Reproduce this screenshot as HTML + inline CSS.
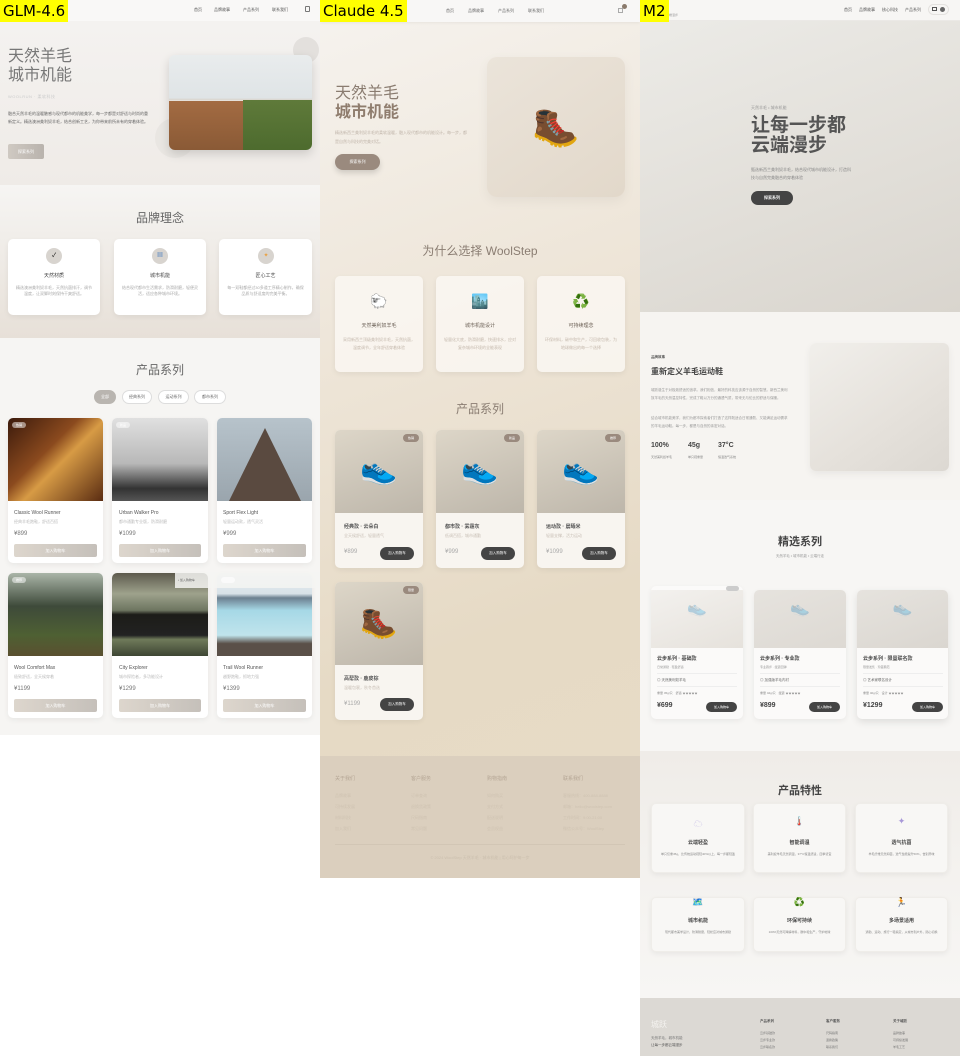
<!DOCTYPE html>
<html><head><meta charset="utf-8">
<style>
*{margin:0;padding:0;box-sizing:border-box}
body{width:960px;height:1056px;position:relative;background:#fff;font-family:"Liberation Sans","Noto Sans CJK SC",sans-serif;overflow:hidden}
.a{position:absolute}
.c{text-align:center}
.t{font-size:4px;color:#999;line-height:6px}
.lbl{position:absolute;top:0;left:0;background:#ffff00;color:#000;font-size:15px;padding:2px 3px;z-index:9;font-family:"DejaVu Sans",sans-serif}
.card{position:absolute;background:#fff;border-radius:5px;box-shadow:0 2px 6px rgba(0,0,0,.06);overflow:hidden}
.pill{position:absolute;height:14px;border-radius:7px;border:1px solid #ddd;background:#fff;font-size:4px;color:#666;text-align:center;line-height:12px}
</style></head><body>

<!-- COLUMN 1 -->
<div class="a" style="left:0;top:0;width:320px;height:735px;background:#f6f5f3;overflow:hidden">
 <div class="a" style="left:0;top:0;width:320px;height:21px;background:#f9f8f7;box-shadow:0 1px 3px rgba(0,0,0,.05)"></div>
 <div class="a t" style="left:194px;top:7px;color:#555">首页</div>
 <div class="a t" style="left:214px;top:7px;color:#555">品牌故事</div>
 <div class="a t" style="left:243px;top:7px;color:#555">产品系列</div>
 <div class="a t" style="left:272px;top:7px;color:#555">联系我们</div>
 <div class="a" style="left:305px;top:6px;width:5px;height:6px;border:1px solid #777;border-radius:1px"></div>
 <div class="a" style="left:0;top:21px;width:320px;height:164px;background:linear-gradient(180deg,#f4f2f0,#efebe7)"></div>
 <div class="a" style="left:8px;top:47px;font-size:16px;line-height:19px;color:#777">天然羊毛<br>城市机能</div>
 <div class="a" style="left:8px;top:94px;font-size:4px;color:#ccc;letter-spacing:.5px">WOOLRUN · 柔软科技</div>
 <div class="a" style="left:8px;top:110px;width:142px;font-size:4px;line-height:8px;color:#666">融合天然羊毛的温暖触感与现代都市的机能美学，每一步都是对舒适与时尚的重新定义。精选澳洲美利奴羊毛，结合创新工艺，为你带来前所未有的穿着体验。</div>
 <div class="a" style="left:8px;top:144px;width:36px;height:15px;border-radius:2px;background:linear-gradient(90deg,#cfc9c2,#b9b3ad);font-size:4px;color:#fff;text-align:center;line-height:15px">探索系列</div>
 <div class="a" style="left:155px;top:118px;width:40px;height:40px;border-radius:50%;background:#e9e6e2"></div>
 <div class="a" style="left:293px;top:37px;width:26px;height:26px;border-radius:50%;background:#e3e0dd"></div>
 <div class="a" style="left:169px;top:55px;width:143px;height:95px;border-radius:6px;overflow:hidden;box-shadow:0 4px 10px rgba(0,0,0,.15);background:linear-gradient(180deg,#e9eced 0%,#dfe4e6 45%,#d8d0c6 48%,transparent 48%)">
  <div class="a" style="left:0;top:46px;width:78px;height:49px;background:linear-gradient(180deg,#a36b42,#8a5a36)"></div>
  <div class="a" style="left:74px;top:45px;width:69px;height:50px;background:linear-gradient(180deg,#5f7a3a,#4d6b2e)"></div>
 </div>
 <div class="a" style="left:0;top:185px;width:320px;height:153px;background:linear-gradient(180deg,#f6f5f3,#e7e0d8)"></div>
 <div class="a c" style="left:0;top:209px;width:320px;font-size:12px;color:#666">品牌理念</div>
 <div class="card" style="left:8px;top:239px;width:92px;height:76px"></div>
 <div class="card" style="left:114px;top:239px;width:92px;height:76px"></div>
 <div class="card" style="left:219px;top:239px;width:93px;height:76px"></div>
 <div class="a" style="left:46px;top:248px;width:16px;height:16px;border-radius:50%;background:#d8d4cf;font-size:6px;text-align:center;line-height:16px">✓</div>
 <div class="a" style="left:152px;top:248px;width:16px;height:16px;border-radius:50%;background:#d8d4cf;font-size:6px;text-align:center;line-height:16px;color:#4a7fc0">▦</div>
 <div class="a" style="left:258px;top:248px;width:16px;height:16px;border-radius:50%;background:#d8d4cf;font-size:6px;text-align:center;line-height:16px;color:#e9a040">✦</div>
 <div class="a c" style="left:8px;top:272px;width:92px;font-size:5px;color:#444">天然材质</div>
 <div class="a c" style="left:114px;top:272px;width:92px;font-size:5px;color:#444">城市机能</div>
 <div class="a c" style="left:219px;top:272px;width:93px;font-size:5px;color:#444">匠心工艺</div>
 <div class="a c t" style="left:16px;top:285px;width:76px;color:#aaa">精选澳洲美利奴羊毛，天然抗菌排汗，调节温度，让双脚时刻保持干爽舒适。</div>
 <div class="a c t" style="left:122px;top:285px;width:76px;color:#aaa">结合现代都市生活需求，防滑耐磨，轻便灵活，适应各种城市环境。</div>
 <div class="a c t" style="left:227px;top:285px;width:77px;color:#aaa">每一双鞋都经过30多道工序精心制作，确保品质与舒适度的完美平衡。</div>
 <div class="a c" style="left:0;top:361px;width:320px;font-size:12px;color:#666">产品系列</div>
 <div class="pill" style="left:94px;top:390px;width:22px;background:#b9b5b0;border-color:#b9b5b0;color:#fff">全部</div>
 <div class="pill" style="left:122px;top:390px;width:30px">经典系列</div>
 <div class="pill" style="left:158px;top:390px;width:31px">运动系列</div>
 <div class="pill" style="left:194px;top:390px;width:32px">都市系列</div>
 <!-- product cards -->
 <div class="card" style="left:8px;top:418px;width:95px;height:145px"><div style="height:83px;background:linear-gradient(135deg,#3b1a0c,#8b4a1e 40%,#d79b45 55%,#5a2c12)"></div></div>
 <div class="card" style="left:112px;top:418px;width:96px;height:145px"><div style="height:83px;background:linear-gradient(180deg,#e0e0e0,#b8b8b8 55%,#333 85%,#555)"></div></div>
 <div class="card" style="left:217px;top:418px;width:95px;height:145px"><div style="height:83px;background:linear-gradient(180deg,#b7c3cb,#9aa5ad);position:relative"><div style="position:absolute;left:12px;top:10px;width:0;height:0;border-left:36px solid transparent;border-right:36px solid transparent;border-bottom:73px solid #5a4a40"></div></div></div>
 <div class="card" style="left:8px;top:573px;width:95px;height:145px"><div style="height:83px;background:linear-gradient(180deg,#aab5a8,#3e4a3a 40%,#4e6033 75%,#5a5030)"></div></div>
 <div class="card" style="left:112px;top:573px;width:96px;height:145px"><div style="height:83px;background:linear-gradient(180deg,#5d5a4d,#9ea28c 25%,#6d7560 45%,#1c1c18 50%,#222 75%,#6f7a5a 80%,#3d4533)"></div></div>
 <div class="card" style="left:217px;top:573px;width:95px;height:145px"><div style="height:83px;background:linear-gradient(180deg,#e8eef2,#d8e2e8 25%,#6c8090 30%,#a6d8e6 45%,#c0e4ec 75%,#5a5048 85%)"></div></div>
 <div class="a" style="left:12px;top:422px;width:14px;height:6px;border-radius:3px;background:rgba(255,255,255,.5);font-size:3px;color:#fff;text-align:center;line-height:6px">热销</div>
 <div class="a" style="left:116px;top:422px;width:14px;height:6px;border-radius:3px;background:rgba(255,255,255,.5);font-size:3px;color:#fff;text-align:center;line-height:6px">新品</div>
 <div class="a" style="left:12px;top:577px;width:14px;height:6px;border-radius:3px;background:rgba(255,255,255,.5);font-size:3px;color:#fff;text-align:center;line-height:6px">推荐</div>
 <div class="a" style="left:175px;top:572px;width:145px;height:16px;background:rgba(245,244,242,.85)"></div>
 <div class="a" style="left:178px;top:578px;font-size:3px;color:#666">• 加入购物车</div>
 <div class="a" style="left:221px;top:577px;width:14px;height:6px;border-radius:3px;background:rgba(255,255,255,.6)"></div>

 <div class="a" style="left:14px;top:510px;font-size:5px;color:#555">Classic Wool Runner</div>
 <div class="a" style="left:119px;top:510px;font-size:5px;color:#555">Urban Walker Pro</div>
 <div class="a" style="left:223px;top:510px;font-size:5px;color:#555">Sport Flex Light</div>
 <div class="a t" style="left:14px;top:519px;color:#bbb">经典羊毛跑鞋，舒适百搭</div>
 <div class="a t" style="left:119px;top:519px;color:#bbb">都市通勤专业版，防滑耐磨</div>
 <div class="a t" style="left:223px;top:519px;color:#bbb">轻量运动款，透气灵活</div>
 <div class="a" style="left:14px;top:531px;font-size:6px;color:#777">¥899</div>
 <div class="a" style="left:119px;top:531px;font-size:6px;color:#777">¥1099</div>
 <div class="a" style="left:223px;top:531px;font-size:6px;color:#777">¥999</div>
 <div class="a" style="left:14px;top:665px;font-size:5px;color:#555">Wool Comfort Max</div>
 <div class="a" style="left:119px;top:665px;font-size:5px;color:#555">City Explorer</div>
 <div class="a" style="left:223px;top:665px;font-size:5px;color:#555">Trail Wool Runner</div>
 <div class="a t" style="left:14px;top:674px;color:#bbb">极致舒适，全天候穿着</div>
 <div class="a t" style="left:119px;top:674px;color:#bbb">城市探险者，多功能设计</div>
 <div class="a t" style="left:223px;top:674px;color:#bbb">越野跑鞋，抓地力强</div>
 <div class="a" style="left:14px;top:686px;font-size:6px;color:#777">¥1199</div>
 <div class="a" style="left:119px;top:686px;font-size:6px;color:#777">¥1299</div>
 <div class="a" style="left:223px;top:686px;font-size:6px;color:#777">¥1399</div>
 <div class="a" style="left:14px;top:544px;width:83px;height:13px;border-radius:2px;background:linear-gradient(90deg,#ddd6cd,#c5c0ba);font-size:4px;color:#fff;text-align:center;line-height:13px">加入购物车</div>
 <div class="a" style="left:119px;top:544px;width:82px;height:13px;border-radius:2px;background:linear-gradient(90deg,#ddd6cd,#c5c0ba);font-size:4px;color:#fff;text-align:center;line-height:13px">加入购物车</div>
 <div class="a" style="left:223px;top:544px;width:83px;height:13px;border-radius:2px;background:linear-gradient(90deg,#ddd6cd,#c5c0ba);font-size:4px;color:#fff;text-align:center;line-height:13px">加入购物车</div>
 <div class="a" style="left:14px;top:699px;width:83px;height:13px;border-radius:2px;background:linear-gradient(90deg,#ddd6cd,#c5c0ba);font-size:4px;color:#fff;text-align:center;line-height:13px">加入购物车</div>
 <div class="a" style="left:119px;top:699px;width:82px;height:13px;border-radius:2px;background:linear-gradient(90deg,#ddd6cd,#c5c0ba);font-size:4px;color:#fff;text-align:center;line-height:13px">加入购物车</div>
 <div class="a" style="left:223px;top:699px;width:83px;height:13px;border-radius:2px;background:linear-gradient(90deg,#ddd6cd,#c5c0ba);font-size:4px;color:#fff;text-align:center;line-height:13px">加入购物车</div>
</div>
<div class="lbl" style="left:0">GLM-4.6</div>

<!-- COLUMN 2 -->
<div class="a" style="left:320px;top:0;width:320px;height:878px;background:linear-gradient(160deg,#f6f3ef 0%,#ede4d6 40%,#e6dac5 70%,#e8dcc6 100%);overflow:hidden">
 <div class="a" style="left:0;top:0;width:320px;height:22px;background:#f8f7f6;box-shadow:0 1px 3px rgba(0,0,0,.06)"></div>
 <div class="a t" style="left:126px;top:8px;color:#666">首页</div>
 <div class="a t" style="left:148px;top:8px;color:#666">品牌故事</div>
 <div class="a t" style="left:178px;top:8px;color:#666">产品系列</div>
 <div class="a t" style="left:208px;top:8px;color:#666">联系我们</div>
 <div class="a" style="left:298px;top:8px;width:5px;height:5px;border:1px solid #aaa"></div>
 <div class="a" style="left:302px;top:4px;width:5px;height:5px;border-radius:50%;background:#8a7a6c"></div>
 <div class="a" style="left:15px;top:84px;font-size:16px;line-height:19px;color:#8a7c70">天然羊毛<br><b style="color:#8f7d6e">城市机能</b></div>
 <div class="a" style="left:15px;top:128px;width:135px;font-size:4px;line-height:9px;color:#c0b5aa">精选新西兰美利奴羊毛的柔软温暖，融入现代都市的机能设计。每一步，都是自然与科技的完美对话。</div>
 <div class="a" style="left:15px;top:154px;width:45px;height:16px;border-radius:8px;background:#9a8a7e;box-shadow:0 3px 6px rgba(0,0,0,.15);font-size:4px;color:#fff;text-align:center;line-height:16px">探索系列</div>
 <div class="a" style="left:167px;top:57px;width:138px;height:140px;border-radius:10px;background:linear-gradient(145deg,#ebe4da,#e2d8ca);box-shadow:0 4px 12px rgba(0,0,0,.05)"></div>
 <div class="a c" style="left:167px;top:106px;width:138px;font-size:38px;line-height:44px;font-family:'Noto Color Emoji','DejaVu Sans',sans-serif">🥾</div>
 <div class="a c" style="left:0;top:242px;width:320px;font-size:12px;color:#8a7d72">为什么选择 WoolStep</div>
 <div class="card" style="left:15px;top:276px;width:88px;height:96px;background:rgba(250,247,242,.85)"></div>
 <div class="card" style="left:116px;top:276px;width:88px;height:96px;background:rgba(250,247,242,.85)"></div>
 <div class="card" style="left:217px;top:276px;width:88px;height:96px;background:rgba(250,247,242,.85)"></div>
 <div class="a c" style="left:15px;top:293px;width:88px;font-size:14px">🐑</div>
 <div class="a c" style="left:116px;top:293px;width:88px;font-size:14px">🏙️</div>
 <div class="a c" style="left:217px;top:293px;width:88px;font-size:14px;color:#3bb070">♻️</div>
 <div class="a c" style="left:15px;top:322px;width:88px;font-size:5px;color:#6d6258">天然美利奴羊毛</div>
 <div class="a c" style="left:116px;top:322px;width:88px;font-size:5px;color:#6d6258">城市机能设计</div>
 <div class="a c" style="left:217px;top:322px;width:88px;font-size:5px;color:#6d6258">可持续理念</div>
 <div class="a c t" style="left:23px;top:336px;width:72px;color:#c4b8ac;line-height:8px">采用新西兰顶级美利奴羊毛，天然抗菌，温度调节，全年舒适穿着体验</div>
 <div class="a c t" style="left:124px;top:336px;width:72px;color:#c4b8ac;line-height:8px">轻量化大底，防滑耐磨，快速排水，应对复杂城市环境的全能表现</div>
 <div class="a c t" style="left:225px;top:336px;width:72px;color:#c4b8ac;line-height:8px">环保材料，碳中和生产，可回收包装，为地球做出的每一个选择</div>
 <div class="a c" style="left:0;top:400px;width:320px;font-size:12px;color:#8a7d72">产品系列</div>
 <!-- product cards -->
 <div class="card" style="left:15px;top:430px;width:88px;height:138px;background:#f8f5f0"><div style="height:83px;background:linear-gradient(160deg,#ddd6c8,#bdb6aa)"></div></div>
 <div class="card" style="left:116px;top:430px;width:88px;height:138px;background:#f8f5f0"><div style="height:83px;background:linear-gradient(160deg,#ddd6c8,#bdb6aa)"></div></div>
 <div class="card" style="left:217px;top:430px;width:88px;height:138px;background:#f8f5f0"><div style="height:83px;background:linear-gradient(160deg,#ddd6c8,#bdb6aa)"></div></div>
 <div class="card" style="left:15px;top:582px;width:88px;height:138px;background:#f8f5f0"><div style="height:83px;background:linear-gradient(160deg,#ddd6c8,#bdb6aa)"></div></div>
 <div class="a c" style="left:15px;top:452px;width:88px;font-size:30px;line-height:36px">👟</div>
 <div class="a c" style="left:116px;top:452px;width:88px;font-size:30px;line-height:36px">👟</div>
 <div class="a c" style="left:217px;top:452px;width:88px;font-size:30px;line-height:36px">👟</div>
 <div class="a c" style="left:15px;top:606px;width:88px;font-size:30px;line-height:36px">🥾</div>
 <div class="a" style="left:83px;top:434px;width:16px;height:8px;border-radius:4px;background:#9a8a7e;font-size:3px;color:#fff;text-align:center;line-height:8px">热销</div>
 <div class="a" style="left:184px;top:434px;width:16px;height:8px;border-radius:4px;background:#9a8a7e;font-size:3px;color:#fff;text-align:center;line-height:8px">新品</div>
 <div class="a" style="left:285px;top:434px;width:16px;height:8px;border-radius:4px;background:#9a8a7e;font-size:3px;color:#fff;text-align:center;line-height:8px">推荐</div>
 <div class="a" style="left:83px;top:586px;width:16px;height:8px;border-radius:4px;background:#9a8a7e;font-size:3px;color:#fff;text-align:center;line-height:8px">限量</div>
 <div class="a" style="left:24px;top:523px;font-size:5px;font-weight:bold;color:#555">经典款 · 云朵白</div>
 <div class="a" style="left:125px;top:523px;font-size:5px;font-weight:bold;color:#555">都市款 · 雾霾灰</div>
 <div class="a" style="left:226px;top:523px;font-size:5px;font-weight:bold;color:#555">运动款 · 晨曦米</div>
 <div class="a" style="left:24px;top:675px;font-size:5px;font-weight:bold;color:#555">高帮款 · 鹿皮棕</div>
 <div class="a t" style="left:24px;top:533px;color:#c9c0b7">全天候舒适，轻量透气</div>
 <div class="a t" style="left:125px;top:533px;color:#c9c0b7">低调百搭，城市通勤</div>
 <div class="a t" style="left:226px;top:533px;color:#c9c0b7">轻量支撑，活力运动</div>
 <div class="a t" style="left:24px;top:685px;color:#c9c0b7">温暖包裹，秋冬首选</div>
 <div class="a" style="left:24px;top:549px;font-size:6px;color:#aaa">¥899</div>
 <div class="a" style="left:125px;top:549px;font-size:6px;color:#aaa">¥999</div>
 <div class="a" style="left:226px;top:549px;font-size:6px;color:#aaa">¥1099</div>
 <div class="a" style="left:24px;top:701px;font-size:6px;color:#aaa">¥1199</div>
 <div class="a" style="left:60px;top:547px;width:34px;height:13px;border-radius:7px;background:#444;font-size:3.5px;color:#fff;text-align:center;line-height:13px">加入购物车</div>
 <div class="a" style="left:161px;top:547px;width:34px;height:13px;border-radius:7px;background:#444;font-size:3.5px;color:#fff;text-align:center;line-height:13px">加入购物车</div>
 <div class="a" style="left:262px;top:547px;width:34px;height:13px;border-radius:7px;background:#444;font-size:3.5px;color:#fff;text-align:center;line-height:13px">加入购物车</div>
 <div class="a" style="left:60px;top:698px;width:34px;height:13px;border-radius:7px;background:#444;font-size:3.5px;color:#fff;text-align:center;line-height:13px">加入购物车</div>
 <!-- footer -->
 <div class="a" style="left:0;top:756px;width:320px;height:122px;background:#dbcfbe"></div>
 <div class="a" style="left:15px;top:775px;font-size:5px;color:#b5a695">关于我们</div>
 <div class="a" style="left:91px;top:775px;font-size:5px;color:#b5a695">客户服务</div>
 <div class="a" style="left:167px;top:775px;font-size:5px;color:#b5a695">购物指南</div>
 <div class="a" style="left:243px;top:775px;font-size:5px;color:#b5a695">联系我们</div>
 <div class="a t" style="left:15px;top:790px;color:#cfc3b2;line-height:11px">品牌故事<br>可持续发展<br>材料科技<br>加入我们</div>
 <div class="a t" style="left:91px;top:790px;color:#cfc3b2;line-height:11px">订单查询<br>退换货政策<br>尺码指南<br>常见问题</div>
 <div class="a t" style="left:167px;top:790px;color:#cfc3b2;line-height:11px">如何购买<br>支付方式<br>配送说明<br>会员权益</div>
 <div class="a t" style="left:243px;top:790px;color:#cfc3b2;line-height:11px">客服热线：400-888-8888<br>邮箱：hello@woolstep.com<br>工作时间：9:00-21:00<br>微信公众号：WoolStep</div>
 <div class="a" style="left:15px;top:844px;width:290px;height:1px;background:#d2c6b5"></div>
 <div class="a c t" style="left:0;top:855px;width:320px;color:#cbbfae">© 2024 WoolStep 天然羊毛 · 城市机能 | 用心呵护每一步</div>
</div>
<div class="lbl" style="left:320px">Claude 4.5</div>

<!-- COLUMN 3 -->
<div class="a" style="left:640px;top:0;width:320px;height:1056px;background:#f7f6f4;overflow:hidden">
 <div class="a" style="left:0;top:0;width:320px;height:21px;background:#f7f6f4;border-bottom:1px solid #ebe9e6"></div>
 <div class="a" style="left:26px;top:13px;font-size:3px;color:#999">云端漫步</div>
 <div class="a t" style="left:204px;top:7px;color:#555">首页</div>
 <div class="a t" style="left:219px;top:7px;color:#555">品牌故事</div>
 <div class="a t" style="left:242px;top:7px;color:#555">核心科技</div>
 <div class="a t" style="left:265px;top:7px;color:#555">产品系列</div>
 <div class="a" style="left:288px;top:4px;width:21px;height:11px;border-radius:6px;border:1px solid #e4e2df"></div>
 <div class="a" style="left:292px;top:7px;width:5px;height:4px;border:1px solid #555"></div>
 <div class="a" style="left:300px;top:7px;width:5px;height:5px;border-radius:50%;background:#666"></div>
 <div class="a" style="left:0;top:21px;width:320px;height:291px;background:linear-gradient(160deg,#ecebe7,#e1ded8 60%,#d9d5ce)"></div>
 <div class="a" style="left:111px;top:105px;font-size:4px;color:#999">天然羊毛 • 城市机能</div>
 <div class="a" style="left:111px;top:116px;font-size:19px;line-height:20px;font-weight:bold;color:#555">让每一步都<br>云端漫步</div>
 <div class="a" style="left:111px;top:166px;width:100px;font-size:4px;line-height:8px;color:#888">甄选新西兰美利奴羊毛，结合现代城市机能设计，打造科技与自然完美融合的穿着体验</div>
 <div class="a" style="left:111px;top:191px;width:42px;height:14px;border-radius:7px;background:#444;font-size:4px;color:#fff;text-align:center;line-height:14px;font-weight:bold">探索系列</div>
 <div class="a" style="left:0;top:312px;width:320px;height:188px;background:#f6f4f1"></div>
 <div class="a" style="left:11px;top:355px;font-size:3.5px;color:#555;font-weight:bold">品牌故事</div>
 <div class="a" style="left:11px;top:366px;font-size:8px;font-weight:bold;color:#444">重新定义羊毛运动鞋</div>
 <div class="a" style="left:11px;top:386px;width:138px;font-size:3.5px;line-height:8px;color:#999">城跃诞生于对极致舒适的追求。我们相信，最好的科技应该源于自然的智慧。新西兰美利奴羊毛的天然温控特性，完成了鞋以万分的通透气质，带来无与伦比的舒适与保暖。</div>
 <div class="a" style="left:11px;top:414px;width:138px;font-size:3.5px;line-height:8px;color:#999">结合城市机能美学，我们为都市探索者们打造了这样既适合日常通勤、又能满足运动需求的羊毛运动鞋。每一步，都是与自然的亲密对话。</div>
 <div class="a" style="left:11px;top:442px;font-size:7px;font-weight:bold;color:#444">100%</div>
 <div class="a" style="left:48px;top:442px;font-size:7px;font-weight:bold;color:#444">45g</div>
 <div class="a" style="left:78px;top:442px;font-size:7px;font-weight:bold;color:#444">37°C</div>
 <div class="a" style="left:11px;top:455px;font-size:3px;color:#888">天然美利奴羊毛</div>
 <div class="a" style="left:48px;top:455px;font-size:3px;color:#888">单只鞋重量</div>
 <div class="a" style="left:78px;top:455px;font-size:3px;color:#888">恒温透气系统</div>
 <div class="a" style="left:170px;top:343px;width:139px;height:128px;border-radius:6px;background:linear-gradient(145deg,#f1efeb,#e5e1db 60%,#dcd8d2);box-shadow:0 3px 8px rgba(0,0,0,.06)"></div>
 <div class="a c" style="left:0;top:533px;width:320px;font-size:11px;font-weight:bold;color:#444">精选系列</div>
 <div class="a c" style="left:0;top:554px;width:320px;font-size:3.5px;color:#999">天然羊毛 • 城市机能 • 云端行走</div>
 <div class="card" style="left:11px;top:586px;width:92px;height:133px;background:#fbfaf9"><div style="margin-top:4px;height:58px;background:linear-gradient(160deg,#f3f1ee,#e6e2dc)"></div></div>
 <div class="card" style="left:114px;top:590px;width:92px;height:129px;background:#fbfaf9"><div style="height:58px;background:linear-gradient(160deg,#e6e3de,#ddd9d3)"></div></div>
 <div class="card" style="left:217px;top:590px;width:91px;height:129px;background:#fbfaf9;box-shadow:0 3px 8px rgba(0,0,0,.1)"><div style="height:58px;background:linear-gradient(160deg,#e6e3de,#dad6d0)"></div></div>
 <div class="a" style="left:86px;top:586px;width:13px;height:5px;border-radius:3px;background:#ccc"></div>
 <div class="a c" style="left:11px;top:598px;width:92px;font-size:16px;opacity:.25">👟</div>
 <div class="a c" style="left:114px;top:598px;width:92px;font-size:16px;opacity:.25">👟</div>
 <div class="a c" style="left:217px;top:598px;width:91px;font-size:16px;opacity:.25">👟</div>
 <div class="a" style="left:17px;top:655px;font-size:5px;font-weight:bold;color:#444">云步系列 · 基础款</div>
 <div class="a" style="left:120px;top:655px;font-size:5px;font-weight:bold;color:#444">云步系列 · 专业款</div>
 <div class="a" style="left:223px;top:655px;font-size:5px;font-weight:bold;color:#444">云步系列 · 限量联名款</div>
 <div class="a" style="left:17px;top:665px;font-size:3px;color:#999">日常通勤 · 轻盈舒适</div>
 <div class="a" style="left:120px;top:665px;font-size:3px;color:#999">专业跑步 · 缓震回弹</div>
 <div class="a" style="left:223px;top:665px;font-size:3px;color:#999">限量发售 · 珍藏典范</div>
 <div class="a" style="left:17px;top:673px;width:80px;height:1px;background:#eee"></div>
 <div class="a" style="left:120px;top:673px;width:80px;height:1px;background:#eee"></div>
 <div class="a" style="left:223px;top:673px;width:80px;height:1px;background:#eee"></div>
 <div class="a" style="left:17px;top:678px;font-size:3.5px;color:#666">◎ 天然美利奴羊毛</div>
 <div class="a" style="left:120px;top:678px;font-size:3.5px;color:#666">◎ 加强版羊毛内衬</div>
 <div class="a" style="left:223px;top:678px;font-size:3.5px;color:#666">◎ 艺术家联名设计</div>
 <div class="a" style="left:17px;top:686px;width:80px;height:1px;background:#eee"></div>
 <div class="a" style="left:120px;top:686px;width:80px;height:1px;background:#eee"></div>
 <div class="a" style="left:223px;top:686px;width:80px;height:1px;background:#eee"></div>
 <div class="a" style="left:17px;top:691px;font-size:3px;color:#888">重量 45g/只　舒适 ★★★★★</div>
 <div class="a" style="left:120px;top:691px;font-size:3px;color:#888">重量 42g/只　缓震 ★★★★★</div>
 <div class="a" style="left:223px;top:691px;font-size:3px;color:#888">重量 40g/只　设计 ★★★★★</div>
 <div class="a" style="left:17px;top:702px;font-size:7px;font-weight:bold;color:#444">¥699</div>
 <div class="a" style="left:120px;top:702px;font-size:7px;font-weight:bold;color:#444">¥899</div>
 <div class="a" style="left:223px;top:702px;font-size:7px;font-weight:bold;color:#444">¥1299</div>
 <div class="a" style="left:66px;top:702px;width:31px;height:10px;border-radius:5px;background:#444;font-size:3px;color:#fff;text-align:center;line-height:10px">加入购物车</div>
 <div class="a" style="left:169px;top:702px;width:31px;height:10px;border-radius:5px;background:#444;font-size:3px;color:#fff;text-align:center;line-height:10px">加入购物车</div>
 <div class="a" style="left:272px;top:702px;width:31px;height:10px;border-radius:5px;background:#444;font-size:3px;color:#fff;text-align:center;line-height:10px">加入购物车</div>
 <div class="a" style="left:0;top:751px;width:320px;height:247px;background:linear-gradient(180deg,#efece8,#f4f2ef 50%,#f7f6f4)"></div>
 <div class="a c" style="left:0;top:782px;width:320px;font-size:11px;font-weight:bold;color:#444">产品特性</div>
 <div class="card" style="left:11px;top:803px;width:94px;height:70px;background:#f8f7f5;border:1px solid #efede9"></div>
 <div class="card" style="left:113px;top:803px;width:93px;height:70px;background:#f8f7f5;border:1px solid #efede9"></div>
 <div class="card" style="left:215px;top:803px;width:93px;height:70px;background:#f8f7f5;border:1px solid #efede9"></div>
 <div class="card" style="left:11px;top:897px;width:94px;height:55px;background:#f8f7f5;border:1px solid #efede9"></div>
 <div class="card" style="left:113px;top:897px;width:93px;height:55px;background:#f8f7f5;border:1px solid #efede9"></div>
 <div class="card" style="left:215px;top:897px;width:93px;height:55px;background:#f8f7f5;border:1px solid #efede9"></div>
 <div class="a c" style="left:11px;top:817px;width:94px;font-size:9px;color:#c8c0e8">☁</div>
 <div class="a c" style="left:113px;top:816px;width:93px;font-size:9px">🌡️</div>
 <div class="a c" style="left:215px;top:816px;width:93px;font-size:9px;color:#a898d8">✦</div>
 <div class="a c" style="left:11px;top:897px;width:94px;font-size:9px">🗺️</div>
 <div class="a c" style="left:113px;top:897px;width:93px;font-size:9px">♻️</div>
 <div class="a c" style="left:215px;top:897px;width:93px;font-size:9px">🏃</div>
 <div class="a c" style="left:11px;top:839px;width:94px;font-size:5px;font-weight:bold;color:#444">云端轻盈</div>
 <div class="a c" style="left:113px;top:839px;width:93px;font-size:5px;font-weight:bold;color:#444">智能调温</div>
 <div class="a c" style="left:215px;top:839px;width:93px;font-size:5px;font-weight:bold;color:#444">透气抗菌</div>
 <div class="a c" style="left:11px;top:917px;width:94px;font-size:5px;font-weight:bold;color:#444">城市机能</div>
 <div class="a c" style="left:113px;top:917px;width:93px;font-size:5px;font-weight:bold;color:#444">环保可持续</div>
 <div class="a c" style="left:215px;top:917px;width:93px;font-size:5px;font-weight:bold;color:#444">多场景适用</div>
 <div class="a c" style="left:17px;top:851px;width:82px;font-size:3px;line-height:6px;color:#888">单只仅重45g，比传统运动鞋轻40%以上，每一步都轻盈</div>
 <div class="a c" style="left:119px;top:851px;width:81px;font-size:3px;line-height:6px;color:#888">美利奴羊毛天然调温，37°C恒温舒适，四季皆宜</div>
 <div class="a c" style="left:221px;top:851px;width:81px;font-size:3px;line-height:6px;color:#888">羊毛纤维天然抑菌，透气性能提升50%，告别异味</div>
 <div class="a c" style="left:17px;top:929px;width:82px;font-size:3px;line-height:6px;color:#888">现代都市美学设计，防滑耐磨，轻松应对城市通勤</div>
 <div class="a c" style="left:119px;top:929px;width:81px;font-size:3px;line-height:6px;color:#888">100%天然可降解材料，碳中和生产，守护地球</div>
 <div class="a c" style="left:221px;top:929px;width:81px;font-size:3px;line-height:6px;color:#888">通勤、运动、旅行一鞋搞定，从城市到户外，随心切换</div>
 <div class="a" style="left:0;top:998px;width:320px;height:58px;background:#dcd9d4"></div>
 <div class="a" style="left:11px;top:1019px;font-size:8px;color:#f4f2ef">城跃</div>
 <div class="a" style="left:11px;top:1036px;font-size:3.5px;color:#777">天然羊毛，城市机能</div>
 <div class="a" style="left:11px;top:1043px;font-size:3.5px;color:#555">让每一步都云端漫步</div>
 <div class="a" style="left:120px;top:1019px;font-size:3.5px;font-weight:bold;color:#555">产品系列</div>
 <div class="a" style="left:186px;top:1019px;font-size:3.5px;font-weight:bold;color:#555">客户服务</div>
 <div class="a" style="left:253px;top:1019px;font-size:3.5px;font-weight:bold;color:#555">关于城跃</div>
 <div class="a" style="left:120px;top:1030px;font-size:3px;line-height:7px;color:#777">云步基础款<br>云步专业款<br>云步联名款</div>
 <div class="a" style="left:186px;top:1030px;font-size:3px;line-height:7px;color:#777">尺码指南<br>退换政策<br>联系我们</div>
 <div class="a" style="left:253px;top:1030px;font-size:3px;line-height:7px;color:#777">品牌故事<br>可持续发展<br>羊毛工艺</div>
</div>
<div class="lbl" style="left:640px">M2</div>

</body></html>
